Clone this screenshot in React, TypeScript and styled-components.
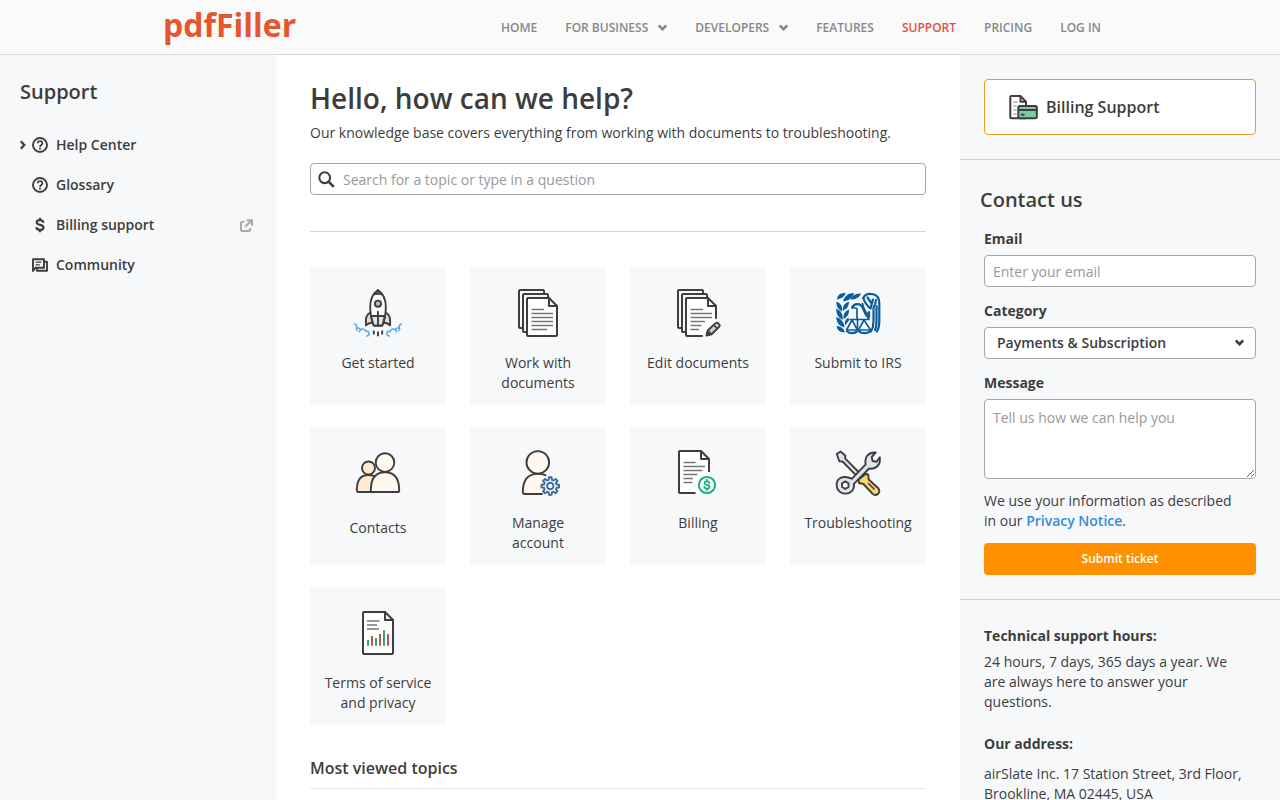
import React from 'react';
import styled, { createGlobalStyle } from 'styled-components';

const ink = '#3d3d3d';
const outline = '#3f3d3d';
const panel = '#f7f8fa';
const rule = '#cfd3d8';

const GlobalStyle = createGlobalStyle`
  *, *::before, *::after { box-sizing: border-box; }
  body {
    margin: 0;
    background: #fff;
    color: ${ink};
    font: 14px/20px "Open Sans", "Noto Sans", sans-serif;
  }
  h1, h2, h3, p, ul { margin: 0; padding: 0; }
  ul { list-style: none; }
  a { color: inherit; text-decoration: none; }
  button, input, select, textarea { font: inherit; color: inherit; }
`;

const Header = styled.header`
  height: 55px;
  background: #fafafa;
  border-bottom: 1px solid #d8dadd;
`;

const HeaderInner = styled.div`
  display: flex;
  align-items: center;
  justify-content: space-between;
  max-width: 950px;
  height: 54px;
  margin: 0 auto;
`;

const Logo = styled.a`
  padding-bottom: 4px;
  color: #e4572e;
  font-size: 32px;
  line-height: 48px;
  font-weight: 700;
  margin-left: -2px;
`;

const TopNav = styled.nav`
  display: flex;
  padding-top: 2px;
`;

const TopLink = styled.a<{ $active?: boolean }>`
  display: flex;
  align-items: center;
  gap: 10px;
  padding: 0 14px;
  font-size: 12px;
  font-weight: 600;
  text-transform: uppercase;
  color: ${(p) => (p.$active ? '#e04f43' : '#888')};
`;

const Columns = styled.div`
  display: grid;
  grid-template-columns: 276px minmax(0, 1fr) 320px;
  min-height: calc(100vh - 55px);
`;

const Sidebar = styled.aside`
  background: ${panel};
  padding: 22px 20px;
`;

const PanelTitle = styled.h2`
  font-size: 20px;
  line-height: 30px;
  font-weight: 600;
`;

const SideList = styled.ul`
  margin-top: 18px;
`;

const SideLink = styled.a`
  display: flex;
  align-items: center;
  height: 40px;
  font-weight: 600;
`;

const ArrowSlot = styled.span`
  display: flex;
  width: 11px;
`;

const SideIcon = styled.span`
  display: flex;
  justify-content: center;
  width: 18px;
  margin-right: 7px;
`;

const ExternalSlot = styled.span`
  display: flex;
  margin: 0 3px 0 auto;
`;

const Main = styled.main`
  padding: 24px 34px;
`;

const Title = styled.h1`
  font-size: 28px;
  line-height: 38px;
  font-weight: 600;
`;

const Intro = styled.p`
  margin: 6px 0 20px;
`;

const SearchBox = styled.label`
  display: flex;
  align-items: center;
  gap: 8px;
  height: 32px;
  padding: 0 7px;
  background: #fff;
  border: 1px solid #a6a6a6;
  border-radius: 4px;
`;

const SearchInput = styled.input`
  flex: 1;
  min-width: 0;
  padding: 2px 0 0;
  border: 0;
  outline: 0;
  background: none;
  &::placeholder { color: #999; opacity: 1; }
`;

const Topics = styled.ul`
  display: grid;
  grid-template-columns: repeat(4, minmax(0, 1fr));
  gap: 24px;
  margin-top: 36px;
  padding-top: 36px;
  border-top: 1px solid ${rule};
`;

const TopicCard = styled.a`
  display: flex;
  flex-direction: column;
  align-items: center;
  gap: 16px;
  height: 136px;
  padding: 21px 8px 0;
  background: ${panel};
  text-align: center;
  white-space: pre-line;
`;

const Artwork = styled.span<{ $height: number }>`
  flex: none;
  height: ${(p) => p.$height}px;
`;

const SectionTitle = styled.h3`
  margin-top: 32px;
  padding-bottom: 8px;
  font-size: 16px;
  line-height: 24px;
  font-weight: 600;
  border-bottom: 1px solid #e3e5e8;
`;

const Aside = styled.aside`
  background: ${panel};
`;

const AsideBlock = styled.section`
  padding: 24px;
  & + & { border-top: 1px solid ${rule}; }
`;

const BillingLink = styled.a`
  display: flex;
  align-items: center;
  gap: 7px;
  height: 56px;
  padding: 0 24px;
  background: #fff;
  border: 1px solid #eb9c25;
  border-radius: 4px;
  font-size: 16px;
  font-weight: 600;
`;

const ContactTitle = styled(PanelTitle)`
  margin: 1px 0 14px -4px;
`;

const Field = styled.div`
  margin-bottom: 14px;
`;

const Label = styled.label`
  display: block;
  margin-bottom: 6px;
  font-weight: 700;
`;

const TextInput = styled.input`
  display: block;
  width: 100%;
  height: 32px;
  padding: 0 8px;
  background: #fff;
  border: 1px solid #a6a6a6;
  border-radius: 4px;
  &::placeholder { color: #999; opacity: 1; }
`;

const TextArea = styled.textarea`
  display: block;
  width: 100%;
  height: 80px;
  padding: 8px;
  background: #fff;
  border: 1px solid #a6a6a6;
  border-radius: 4px;
  resize: vertical;
  &::placeholder { color: #999; opacity: 1; }
`;

const SelectWrap = styled.div`
  display: grid;
  align-items: center;
  & > * { grid-area: 1 / 1; }
  & > svg { justify-self: end; margin-right: 12px; pointer-events: none; }
`;

const Select = styled.select`
  appearance: none;
  width: 100%;
  height: 32px;
  padding: 0 12px;
  background: #fff;
  border: 1px solid #a6a6a6;
  border-radius: 4px;
  font-weight: 600;
`;

const PrivacyLink = styled.a`
  color: #2f8edb;
  font-weight: 600;
`;

const AsideText = styled.p`
  padding-right: 12px;
`;

const Note = styled(AsideText)`
  margin: -2px 0 12px;
`;

const Submit = styled.button`
  display: block;
  width: 100%;
  height: 32px;
  border: 0;
  border-radius: 4px;
  background: #ff9100;
  color: #fff;
  font-size: 12px;
  font-weight: 600;
`;

const InfoTitle = styled.h3`
  margin: 2px 0 6px;
  font-size: 14px;
  line-height: 20px;
  font-weight: 700;
  p + & { margin: 22px 0 10px; }
`;

const Chevron = () => (
  <svg width="9" height="8" viewBox="0 0 9 8" fill="none" stroke="currentColor" strokeWidth="2.6" aria-hidden="true">
    <path d="M.8 1.500 4.500 5.200 8.200 1.500" />
  </svg>
);

const ChevronRight = () => (
  <svg width="6" height="10" viewBox="0 0 6 10" fill="none" stroke="currentColor" strokeWidth="2.2" aria-hidden="true">
    <path d="M.8 1.300 4.300 5 .8 8.700" />
  </svg>
);

const HelpIcon = () => (
  <svg width="16" height="16" viewBox="0 0 16 16" fill="none" stroke="currentColor" strokeWidth="1.900" aria-hidden="true">
    <circle cx="8" cy="8" r="7" />
    <path d="M5.600 6.300A2.400 2.300 0 0 1 8 4.100a2.300 2.200 0 0 1 2.400 2.200c0 1.600-2.400 1.800-2.400 3.600" strokeWidth="1.700" />
    <path d="M8 10.800v1.800" strokeWidth="1.900" />
  </svg>
);

const DollarIcon: React.FC<{ size: number; x?: number; y?: number; color?: string }> = ({ size, x, y, color = 'currentColor' }) => (
  <svg x={x} y={y} width={size} height={size} viewBox="0 0 16 16" fill="none" stroke={color} strokeWidth="2.200" aria-hidden="true">
    <path d="M11.300 5.700C11.200 4 9.900 3.200 8 3.200S4.700 4.100 4.700 5.500C4.700 8.700 11.500 7 11.500 10.400c0 1.500-1.500 2.400-3.500 2.400s-3.500-.9-3.600-2.700" />
    <path d="M8 .7v2.600M8 12.600v2.700" />
  </svg>
);

const ForumIcon = () => (
  <svg width="16" height="16" viewBox="0 0 16 16" fill="none" stroke="currentColor" aria-hidden="true">
    <path d="M1 14V2.200h11v8.600H3.500z" strokeWidth="1.900" strokeLinejoin="round" />
    <path d="M3.600 5.200h5.800M3.600 7.900h4.200" strokeWidth="1.300" />
    <path d="M12.500 4.800H15v9H5v-2.500" strokeWidth="1.900" strokeLinejoin="round" />
  </svg>
);

const ExternalIcon = () => (
  <svg width="13" height="13" viewBox="0 0 13 13" fill="none" stroke="#aaa" strokeWidth="2" aria-hidden="true">
    <path d="M4.500 2.800H2.200A1.200 1.200 0 0 0 1 4v6.800A1.200 1.200 0 0 0 2.200 12H9a1.200 1.200 0 0 0 1.200-1.200V9" />
    <path d="M6.500 1.200H12v5.500M11.500 1.500 5.200 7.800" />
  </svg>
);

const SearchIcon = () => (
  <svg width="17" height="17" viewBox="0 0 17 17" fill="none" stroke={outline} strokeWidth="2.100" aria-hidden="true">
    <circle cx="6.700" cy="6.700" r="5.400" />
    <path d="m10.600 10.600 5.200 5.200" strokeWidth="2.600" />
  </svg>
);

const InvoiceCardIcon = () => (
  <svg width="30" height="26" viewBox="0 0 30 26" fill="none" stroke={outline} strokeWidth="2" strokeLinejoin="round" aria-hidden="true">
    <path d="M2.300 2h9.200l5.500 5.700v16.500H2.300a1 1 0 0 1-1-1V3a1 1 0 0 1 1-1z" fill="#fff" />
    <path d="M11.500 2v5.800h5.500" />
    <path d="M4.500 8.200h4M4.500 12h3M4.500 16h3M4.500 20h3" stroke="#aaa" strokeWidth="1.500" />
    <rect x="9.300" y="12" width="18.500" height="12.300" rx="1.500" fill="#7bcf9f" />
    <path d="M10 16h18" />
    <path d="M12 20.700h3.500" />
  </svg>
);

const Art: React.FC<{ children: React.ReactNode }> = ({ children }) => (
  <svg width="60" height="48" viewBox="0 0 60 48" fill="none" stroke={outline} strokeWidth="1.900" strokeLinecap="round" strokeLinejoin="round" aria-hidden="true">
    {children}
  </svg>
);

const RocketArt = () => (
  <Art>
    <path d="M22.500 23.500C19 25.500 17.900 28 17.900 31v5.300c1.500-1.600 3-2.500 6-2.600" fill="#d9dde1" />
    <path d="M37.500 23.500C41 25.500 42.100 28 42.100 31v5.300c-1.500-1.600-3-2.500-6-2.600" fill="#d9dde1" />
    <path d="M30 1c4.300 3.200 7.800 9.300 7.800 16.500 0 8-1.500 14.500-3.600 19h-8.400c-2.100-4.500-3.600-11-3.600-19C22.200 10.300 25.700 4.200 30 1z" fill="#fff" />
    <path d="M23.200 27h13.600c-.6 3.500-1.500 6.900-2.600 9.500h-8.400c-1.100-2.600-2-6-2.600-9.500z" fill="#e1e5e9" />
    <path d="M30 1.200c1.600 1.200 3 2.800 4 4.500-2.600-.7-5.400-.7-8 0 1-1.700 2.400-3.300 4-4.500z" fill="#9a3c3f" strokeWidth="1.300" />
    <circle cx="30" cy="14.700" r="3.100" fill="#9fc8e0" />
    <path d="M30 22.700v14" />
    <path d="M25.800 41.500v4M30 42.500v4.700M34.200 41.500v4" strokeLinecap="butt" />
    <g stroke="#55a8e8" strokeWidth="1.500">
      <path d="M6.600 35c2 .6 2.500 2.300 1.900 4.200 1.800-.7 3.400 0 4 1.600 2-1.500 5-.6 5.300 1.600 2.600-.6 4.200 1.600 3 3.600-.4.700-1.200 1-2 1" />
      <path d="M53.400 35c-2 .6-2.500 2.300-1.900 4.200-1.800-.7-3.400 0-4 1.600-2-1.500-5-.6-5.300 1.600-2.600-.6-4.200 1.600-3 3.600.4.700 1.200 1 2 1" />
      <path d="M8.500 39.200c-.3 1 .2 1.800.9 2.300M12.500 40.800c-.8.500-1.100 1.300-.9 2M51.500 39.200c.3 1-.2 1.800-.9 2.300M47.500 40.800c.8.500 1.100 1.300.9 2" />
    </g>
  </Art>
);

const DocumentsArt = () => (
  <Art>
    <g strokeWidth="2">
      <path d="M15 39H12a1 1 0 0 1-1-1V2a1 1 0 0 1 1-1h23a1 1 0 0 1 1 1v2" />
      <path d="M19 43H16a1 1 0 0 1-1-1V6a1 1 0 0 1 1-1h23a1 1 0 0 1 1 1v2" />
      <path d="M20 9h21l8 8v29a1 1 0 0 1-1 1H20a1 1 0 0 1-1-1V10a1 1 0 0 1 1-1z" fill="#fff" />
      <path d="M41 9v8h8" />
    </g>
    <path d="M23.500 20.500H36M23.500 24.500H45M23.500 28.500H45M23.500 32.500H45M23.500 36.500H45M23.500 40.500H39" stroke="#777" strokeWidth="1.500" strokeLinecap="butt" />
  </Art>
);

const EditArt = () => (
  <Art>
    <path d="M18 9h22l8 8v13L35 47H18z" fill="#fff" stroke="none" />
    <g strokeWidth="2">
      <path d="M14 39H11a1 1 0 0 1-1-1V2a1 1 0 0 1 1-1h23a1 1 0 0 1 1 1v2" />
      <path d="M18 43H15a1 1 0 0 1-1-1V6a1 1 0 0 1 1-1h23a1 1 0 0 1 1 1v2" />
      <path d="M34 47H19a1 1 0 0 1-1-1V10a1 1 0 0 1 1-1h21l8 8v12" />
      <path d="M40 9v8h8" />
    </g>
    <path d="M22.500 20.500H35M22.500 24.500H44M22.500 28.500H44M22.500 32.500H37M22.500 36.500H33.500M22.500 40.500H31" stroke="#777" strokeWidth="1.500" strokeLinecap="butt" />
    <path d="m38.800 46.200 1-4.700 7.800-7.400a1.600 1.600 0 0 1 2.300 0l1.300 1.300a1.600 1.600 0 0 1 0 2.300l-7.600 7.500z" fill="#c3d2dc" />
    <path d="m45.700 36 3.600 3.600M40 41.800l3.300 3.300" strokeWidth="1.500" />
    <path d="m38.500 46.500.8-3.100 2.200 2.300z" fill={outline} />
  </Art>
);

const IrsArt = () => (
  <Art>
    <g fill="#0a5c9e" stroke="none">
      <path d="M9 10.500C9.500 6 12 4 17.500 4 17 7.500 13.500 9.500 9 10.500z" />
      <path d="M15 12.500C16.500 7 20 4 26 4c-1 5-5 7.500-11 8.500z" />
      <path d="M22.500 10.500c2-4.500 5.500-6.500 10.500-6-1.500 4-5.500 6-10.500 6z" />
      <path d="M8.500 12.500c4.500 2 6.500 5.500 5.500 10-4-2.500-6-5.500-5.500-10z" />
      <path d="M15 21.500c-.5-4.500 1.500-7.500 6-9-.2 4.500-2 7.500-6 9z" />
      <path d="M8.300 19.500c5 2.500 7 6 6.200 11.500-4.700-3-6.500-6.500-6.200-11.500z" />
      <path d="M15.500 30c-.3-5 1.500-8 5.500-9.500.3 4.500-1.500 7.500-5.500 9.500z" />
      <path d="M8.300 28c5.200 2 8 5.500 8.200 10.500-5.500-1.500-8.200-5-8.200-10.500z" />
      <path d="M17 36.500c-.8-3.500.2-6 3.500-8l.5 3z" />
      <path d="M8.500 37c4.300.2 7 2 8.500 6.500-5-.3-7.800-2-8.500-6.500z" />
    </g>
    <g stroke="#0a5c9e" strokeWidth="2.200">
      <path d="M35.300 9c1.500-3.500 5.500-4.700 10-3.700 4.700 1 6 4.500 6 9.700v18c0 4-.8 7-2.300 9.500" />
      <path d="M35.300 9c1.500 4.500 4 8 7.200 10.500L45 10.500M39.500 8.500l3.500 5M48 11c-.3 3-.8 5-2.500 7.500v14c0 4-.7 7-2.500 10" />
      <path d="M48.500 17v16c0 3-.5 5.500-1.500 8" />
      <path d="M24 18.500c1.500-3 3.500-3.800 6.500-3.300 4 .7 4.500 3.800 5.500 6.800s2.500 5 4.500 7" />
      <path d="M24.500 19c2-.5 3.500-.3 4.500 1v10M34.500 14.500c1 5 3 9 6 11.500" strokeWidth="1.700" />
      <path d="M41 23v5" />
    </g>
    <g stroke="#0a5c9e" strokeWidth="1.600">
      <path d="M22 30.500h19M29.500 30v9M24 31l-5.500 10h11zM36 31l-5.500 10h12z" />
      <path d="M19 42.300c2.500 2.500 8 2.500 10 0M31 42.300c2.500 2.500 8.500 2.500 11 0" strokeWidth="2.200" />
    </g>
  </Art>
);

const ContactsArt = () => (
  <Art>
    <circle cx="20.500" cy="19" r="6.500" fill="#feebd2" />
    <path d="M22.700 43H10.500c-1.200 0-1.700-.7-1.700-1.700C8.800 31.500 12 26 20.300 26c3.300 0 5.700.7 7.700 2.200L22.700 43z" fill="#feebd2" />
    <circle cx="37" cy="13.600" r="9.300" fill="#fff8ef" />
    <path d="M24.300 43c-1 0-1.500-.6-1.500-1.600C22.800 29.500 27.500 23.200 37 23.200s14.200 6.300 14.200 18.200c0 1-.5 1.600-1.500 1.600z" fill="#fff8ef" />
  </Art>
);

const AccountArt = () => (
  <Art>
    <path d="M34.300 45H16.700c-1.300 0-1.900-.6-1.900-1.900 0-11.700 5.200-18 15-18 3.200 0 5.900.6 8.200 2z" fill="#fff8ef" stroke="none" />
    <circle cx="29.800" cy="13.400" r="11.300" fill="#fff8ef" />
    <path d="M34 45H16.700c-1.300 0-1.900-.6-1.900-1.900 0-11.700 5.200-18.200 15-18.200 3.200 0 5.700.4 7.700 1.300" />
    <g stroke="#3d6b9c" strokeWidth="1.900" transform="translate(-.7 -.4)">
      <path
        d="M41.400 31.200 41.700 28.600h2.600l.3 2.600 1.600.7 2.100-1.600 1.900 1.900-1.600 2.100.7 1.600 2.500.3v2.600l-2.500.3-.7 1.600 1.600 2.100-1.900 1.900-2.100-1.600-1.600.7-.3 2.500h-2.600l-.3-2.500-1.600-.7-2.100 1.600-1.900-1.900 1.600-2.100-.7-1.600-2.500-.3v-2.600l2.500-.3.7-1.600-1.600-2.100 1.900-1.900 2.100 1.600z"
        fill={panel}
      />
      <circle cx="43" cy="37.400" r="3.200" />
    </g>
  </Art>
);

const BillingArt = () => (
  <Art>
    <path d="M11 2h22l8 8v17L30 44H11z" fill="#fff" stroke="none" />
    <g strokeWidth="2" strokeLinecap="butt">
      <path d="M27.500 44H12a1 1 0 0 1-1-1V3a1 1 0 0 1 1-1h21l8 8v13" />
      <path d="M33 2v8h8" />
    </g>
    <path d="M15.500 13.500H27.500M15.500 17.500H37M15.500 21.500H34.500M15.500 25.500H29.500M15.500 29.500H25M15.500 33.500H24.500" stroke="#777" strokeWidth="1.500" strokeLinecap="butt" />
    <circle cx="39" cy="36" r="10.500" fill={panel} stroke="none" />
    <circle cx="39" cy="36" r="8.100" fill="#fff" stroke="#14b07a" strokeWidth="2" />
    <DollarIcon x={33} y={30} size={12} color="#14b07a" />
  </Art>
);

const ToolsArt = () => (
  <Art>
    <path d="m8.800 5 3.700-2.500 4.700 4 .1 3.200L31 23.500l-2.800 2.800L14.500 12.500l-3.200-.3z" fill="#dfe5ec" />
    <path d="M30.500 30.500 37 25.500c1-.8 2.500-.4 3.300.5l.4 4.500 9.300 8.500c4 4.300-1.800 9.300-5.700 5.600L35.500 35l-4.500-1z" fill="#fbd568" />
    <path d="m40.500 34.500 5.500 5.500" strokeWidth="1.600" />
    <path d="M24 29.700 37.700 15.300c-1.500-7.700 3-12.300 10-11.800l-4 4.500.9 4 4 .8 3.200-4.500c1 7-3.500 12.500-10.700 11.200L25.900 34.900c.9 6-3.600 9.800-8.600 9.700-5-.1-8.700-3.700-8.700-8.600 0-6 5.100-10.500 15.400-6.300z" fill="#dfe5ec" />
    <path d="m17.300 32.400 3.200 1.900v3.700l-3.200 1.900-3.200-1.900v-3.700z" fill="#fff" />
  </Art>
);

const TermsArt = () => (
  <Art>
    <g strokeWidth="2">
      <path d="M16 3h21l8 8v33a1 1 0 0 1-1 1H16a1 1 0 0 1-1-1V4a1 1 0 0 1 1-1z" fill="#fff" />
      <path d="M37 3v8h8" />
    </g>
    <path d="M19 12H31.500M19 16H29M19 20H31" stroke="#777" strokeWidth="1.600" strokeLinecap="butt" />
    <path d="M20 36.700V31M28 36.700V29M36 36.700V21.300" stroke="#3f9f6c" strokeWidth="2" strokeLinecap="butt" />
    <path d="M24 36.700V27M32 36.700V25M40 36.700V25" stroke="#bd5459" strokeWidth="2" strokeLinecap="butt" />
  </Art>
);

const topNav = [
  { label: 'Home' },
  { label: 'For business', menu: true },
  { label: 'Developers', menu: true },
  { label: 'Features' },
  { label: 'Support', active: true },
  { label: 'Pricing' },
  { label: 'Log in' },
];

const sideNav = [
  { label: 'Help Center', icon: <HelpIcon />, expandable: true },
  { label: 'Glossary', icon: <HelpIcon /> },
  { label: 'Billing support', icon: <DollarIcon size={16} /> },
  { label: 'Community', icon: <ForumIcon /> },
];

const externalPages = ['Billing support'];

const topics = [
  { label: 'Get started', art: <RocketArt />, height: 48 },
  { label: 'Work with documents', art: <DocumentsArt />, height: 48 },
  { label: 'Edit documents', art: <EditArt />, height: 48 },
  { label: 'Submit to IRS', art: <IrsArt />, height: 48 },
  { label: 'Contacts', art: <ContactsArt />, height: 53 },
  { label: 'Manage\naccount', art: <AccountArt />, height: 48 },
  { label: 'Billing', art: <BillingArt />, height: 48 },
  { label: 'Troubleshooting', art: <ToolsArt />, height: 48 },
  { label: 'Terms of service and privacy', art: <TermsArt />, height: 48 },
];

export default function App() {
  return (
    <>
      <GlobalStyle />
      <Header>
        <HeaderInner>
          <Logo href="#">pdfFiller</Logo>
          <TopNav>
            {topNav.map((item) => (
              <TopLink key={item.label} href="#" $active={item.active}>
                {item.label}
                {item.menu && <Chevron />}
              </TopLink>
            ))}
          </TopNav>
        </HeaderInner>
      </Header>
      <Columns>
        <Sidebar>
          <PanelTitle>Support</PanelTitle>
          <SideList>
            {sideNav.map((item) => (
              <li key={item.label}>
                <SideLink href="#">
                  <ArrowSlot>{item.expandable && <ChevronRight />}</ArrowSlot>
                  <SideIcon>{item.icon}</SideIcon>
                  {item.label}
                  {externalPages.includes(item.label) && (
                    <ExternalSlot>
                      <ExternalIcon />
                    </ExternalSlot>
                  )}
                </SideLink>
              </li>
            ))}
          </SideList>
        </Sidebar>
        <Main>
          <Title>Hello, how can we help?</Title>
          <Intro>Our knowledge base covers everything from working with documents to troubleshooting.</Intro>
          <SearchBox>
            <SearchIcon />
            <SearchInput type="search" aria-label="Search" placeholder="Search for a topic or type in a question" />
          </SearchBox>
          <Topics>
            {topics.map((topic) => (
              <li key={topic.label}>
                <TopicCard href="#">
                  <Artwork $height={topic.height}>{topic.art}</Artwork>
                  <span>{topic.label}</span>
                </TopicCard>
              </li>
            ))}
          </Topics>
          <SectionTitle>Most viewed topics</SectionTitle>
        </Main>
        <Aside>
          <AsideBlock>
            <BillingLink href="#">
              <InvoiceCardIcon />
              Billing Support
            </BillingLink>
          </AsideBlock>
          <AsideBlock as="form">
            <ContactTitle>Contact us</ContactTitle>
            <Field>
              <Label htmlFor="email">Email</Label>
              <TextInput id="email" type="email" placeholder="Enter your email" />
            </Field>
            <Field>
              <Label htmlFor="category">Category</Label>
              <SelectWrap>
                <Select id="category">
                  <option>Payments &amp; Subscription</option>
                </Select>
                <Chevron />
              </SelectWrap>
            </Field>
            <Field>
              <Label htmlFor="message">Message</Label>
              <TextArea id="message" placeholder="Tell us how we can help you" />
            </Field>
            <Note>
              We use your information as described in our <PrivacyLink href="#">Privacy Notice</PrivacyLink>.
            </Note>
            <Submit type="button">Submit ticket</Submit>
          </AsideBlock>
          <AsideBlock>
            <InfoTitle>Technical support hours:</InfoTitle>
            <AsideText>24 hours, 7 days, 365 days a year. We are always here to answer your questions.</AsideText>
            <InfoTitle>Our address:</InfoTitle>
            <AsideText>airSlate Inc. 17 Station Street, 3rd Floor, Brookline, MA 02445, USA</AsideText>
          </AsideBlock>
        </Aside>
      </Columns>
    </>
  );
}
